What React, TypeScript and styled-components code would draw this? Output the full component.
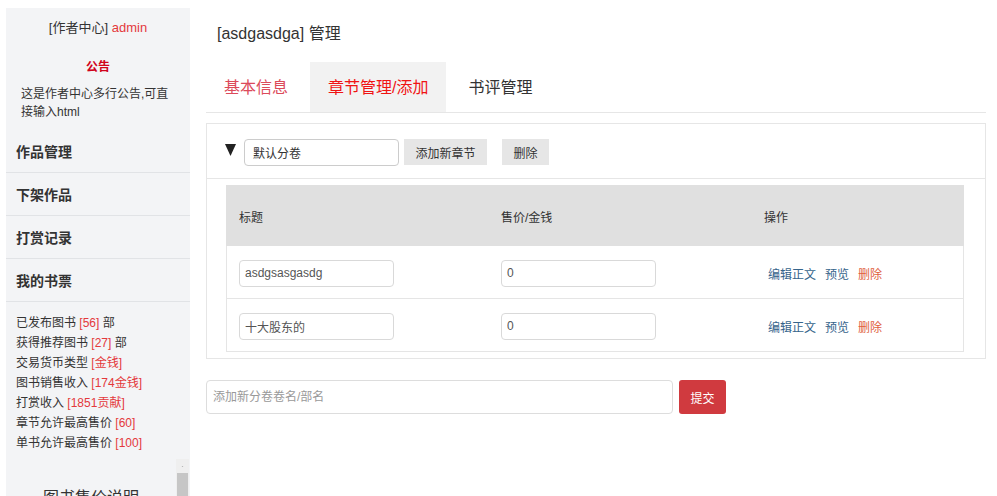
import React from "react";
import styled, { createGlobalStyle } from "styled-components";

const Global = createGlobalStyle`
  html, body { margin: 0; padding: 0; height: 100%; overflow: hidden; background: #fff; }
  body {
    font-family: "Liberation Sans", "Noto Sans CJK SC", sans-serif;
    color: #333;
    font-size: 12px;
  }
  * { box-sizing: border-box; }
`;

const Page = styled.div`
  display: flex;
  align-items: flex-start;
  padding: 8px 0 0 6px;
  height: 496px;
  overflow: hidden;
`;

const Sidebar = styled.aside`
  width: 184px;
  flex-shrink: 0;
  height: 520px;
  background: #f3f4f6;
  display: flex;
  flex-direction: column;
`;

const SideHeader = styled.div`
  padding-top: 11px;
  line-height: 18px;
  font-size: 13px;
  text-align: center;
  color: #333;
`;

const Red = styled.span<{ $dark?: boolean }>`
  color: ${(p) => (p.$dark ? "#e00" : "#e4393c")};
`;

const NoticeTitle = styled.div`
  margin-top: 21px;
  line-height: 18px;
  font-size: 12px;
  font-weight: bold;
  text-align: center;
  color: #d0021b;
`;

const NoticeText = styled.p`
  margin: 9px 0 0;
  padding: 0 15px;
  line-height: 18px;
  font-size: 12px;
  color: #333;
`;

const Menu = styled.nav`
  margin-top: 9px;
  display: flex;
  flex-direction: column;
`;

const MenuItem = styled.a`
  height: 43px;
  line-height: 44px;
  padding-left: 10px;
  border-bottom: 1px solid #e1e3e6;
  font-size: 14px;
  font-weight: bold;
  color: #333;
  text-decoration: none;
`;

const Stats = styled.ul`
  list-style: none;
  margin: 0;
  padding: 11px 0 0 10px;
`;

const StatLine = styled.li`
  line-height: 20px;
  font-size: 12px;
  color: #333;
`;

const ScrollBox = styled.div`
  margin-top: 6px;
  height: 200px;
  display: flex;
  overflow: hidden;
`;

const ScrollContent = styled.div`
  flex: 1;
  min-width: 0;
  overflow: hidden;
`;

const FakeScrollbar = styled.div`
  width: 13px;
  flex-shrink: 0;
  margin-right: 1px;
  background: #efefef;
  display: flex;
  flex-direction: column;
  align-items: center;
  padding-top: 7px;
`;

const BarArrow = styled.svg`
  width: 7px;
  height: 4px;
  display: block;
`;

const BarThumb = styled.div`
  margin-top: 6px;
  width: 11px;
  height: 150px;
  background: #c6c6c6;
`;

const ScrollTitle = styled.h3`
  margin: 0;
  padding-top: 29px;
  line-height: 20px;
  font-size: 16px;
  font-weight: normal;
  text-align: center;
  color: #333;
`;

const ScrollText = styled.p`
  margin: 10px 0 0;
  padding: 0 10px;
  line-height: 20px;
  font-size: 12px;
`;

const Main = styled.main`
  margin-left: 16px;
  width: 780px;
  flex-shrink: 0;
`;

const Title = styled.h2`
  margin: 14px 0 0 11px;
  line-height: 24px;
  font-size: 16px;
  font-weight: normal;
  color: #333;
`;

const Tabs = styled.div`
  margin-top: 16px;
  display: flex;
  gap: 4px;
  border-bottom: 1px solid #e6e6e6;
`;

const Tab = styled.a<{ $active?: boolean; $color: string }>`
  height: 50px;
  line-height: 52px;
  padding: 0 18px;
  font-size: 16px;
  color: ${(p) => p.$color};
  background: ${(p) => (p.$active ? "#f2f2f2" : "transparent")};
  text-decoration: none;
`;

const Panel = styled.section`
  margin-top: 10px;
  border: 1px solid #e6e6e6;
`;

const PanelHead = styled.div`
  height: 55px;
  display: flex;
  align-items: center;
  padding: 2px 0 0 18px;
  border-bottom: 1px solid #e6e6e6;
`;

const Arrow = styled.svg`
  width: 11px;
  height: 12px;
  margin-top: -4px;
  flex-shrink: 0;
`;

const VolumeInput = styled.input`
  width: 155px;
  height: 27px;
  margin-left: 8px;
  padding: 0 8px;
  border: 1px solid #ccc;
  border-radius: 4px;
  font: inherit;
  font-size: 12px;
  color: #333;
  outline: none;
`;

const GrayButton = styled.button<{ $gap: number }>`
  height: 26px;
  margin-left: ${(p) => p.$gap}px;
  padding: 0 11.5px;
  border: none;
  background: #e6e6e6;
  font: inherit;
  font-size: 12px;
  color: #333;
`;

const TableWrap = styled.div`
  padding: 6px 21px 6px 19px;
`;

const Grid = styled.div<{ $head?: boolean }>`
  display: grid;
  grid-template-columns: 262px 263px 1fr;
  align-items: center;
  height: ${(p) => (p.$head ? "61px" : "53px")};
  padding-top: ${(p) => (p.$head ? "1px" : "2px")};
  background: ${(p) => (p.$head ? "#e0e0e0" : "#fff")};
  border-left: 1px solid ${(p) => (p.$head ? "#e0e0e0" : "#e5e5e5")};
  border-right: 1px solid ${(p) => (p.$head ? "#e0e0e0" : "#e5e5e5")};
  border-bottom: ${(p) => (p.$head ? "none" : "1px solid #e5e5e5")};
`;

const Cell = styled.div<{ $pad?: number }>`
  padding-left: ${(p) => p.$pad ?? 12}px;
  font-size: 12px;
  color: #333;
  display: flex;
  align-items: center;
`;

const CellInput = styled.input`
  width: 155px;
  height: 27px;
  padding: 0 5px;
  border: 1px solid #d9d9d9;
  border-radius: 4px;
  font: inherit;
  font-size: 12px;
  color: #555;
  outline: none;
`;

const ActionLink = styled.a<{ $danger?: boolean }>`
  margin-right: 9px;
  font-size: 12px;
  color: ${(p) => (p.$danger ? "#e0603c" : "#36648b")};
  text-decoration: none;
`;

const AddForm = styled.form`
  margin-top: 21px;
  display: flex;
  gap: 6px;
`;

const AddInput = styled.input`
  width: 467px;
  height: 34px;
  padding: 0 6px;
  border: 1px solid #ddd;
  border-radius: 4px;
  font: inherit;
  font-size: 12px;
  outline: none;
  &::placeholder { color: #999; }
`;

const SubmitButton = styled.button`
  width: 47px;
  height: 34px;
  border: none;
  border-radius: 3px;
  background: #d03a3f;
  color: #fff;
  font: inherit;
  font-size: 12px;
`;

const stats: [string, string, string?][] = [
  ["已发布图书", "[56]", "部"],
  ["获得推荐图书", "[27]", "部"],
  ["交易货币类型", "[金钱]"],
  ["图书销售收入", "[174金钱]"],
  ["打赏收入", "[1851贡献]"],
  ["章节允许最高售价", "[60]"],
  ["单书允许最高售价", "[100]"],
];

const chapters = [
  { title: "asdgsasgasdg", price: "0" },
  { title: "十大股东的", price: "0" },
];

export default function App() {
  return (
    <>
      <Global />
      <Page>
        <Sidebar>
          <SideHeader>
            [作者中心] <Red>admin</Red>
          </SideHeader>
          <NoticeTitle>公告</NoticeTitle>
          <NoticeText>这是作者中心多行公告,可直接输入html</NoticeText>
          <Menu>
            <MenuItem>作品管理</MenuItem>
            <MenuItem>下架作品</MenuItem>
            <MenuItem>打赏记录</MenuItem>
            <MenuItem>我的书票</MenuItem>
          </Menu>
          <Stats>
            {stats.map(([label, value, unit]) => (
              <StatLine key={label}>
                {label} <Red>{value}</Red>
                {unit ? ` ${unit}` : ""}
              </StatLine>
            ))}
          </Stats>
          <ScrollBox>
            <ScrollContent>
              <ScrollTitle>图书售价说明</ScrollTitle>
              <ScrollText>
                章节售价以金钱计算，单章售价不得超过章节允许最高售价，整本图书售价不得超过单书允许最高售价。
              </ScrollText>
              <ScrollText>售价为0的章节为免费章节，读者可直接阅读。</ScrollText>
            </ScrollContent>
            <FakeScrollbar>
              <BarArrow viewBox="0 0 7 4">
                <polygon points="3.5,0 7,4 0,4" fill="#a3a3a3" />
              </BarArrow>
              <BarThumb />
            </FakeScrollbar>
          </ScrollBox>
        </Sidebar>
        <Main>
          <Title>[asdgasdga] 管理</Title>
          <Tabs>
            <Tab $color="#dc4a5a">基本信息</Tab>
            <Tab $active $color="#f01414">
              章节管理/添加
            </Tab>
            <Tab $color="#333">书评管理</Tab>
          </Tabs>
          <Panel>
            <PanelHead>
              <Arrow viewBox="0 0 11 12">
                <polygon points="0,0 11,0 5.5,12" fill="#222" />
              </Arrow>
              <VolumeInput defaultValue="默认分卷" />
              <GrayButton $gap={5}>添加新章节</GrayButton>
              <GrayButton $gap={15}>删除</GrayButton>
            </PanelHead>
            <TableWrap>
              <Grid $head>
                <Cell>标题</Cell>
                <Cell>售价/金钱</Cell>
                <Cell>操作</Cell>
              </Grid>
              {chapters.map((c) => (
                <Grid key={c.title}>
                  <Cell>
                    <CellInput defaultValue={c.title} />
                  </Cell>
                  <Cell>
                    <CellInput defaultValue={c.price} />
                  </Cell>
                  <Cell $pad={16}>
                    <ActionLink>编辑正文</ActionLink>
                    <ActionLink>预览</ActionLink>
                    <ActionLink $danger>删除</ActionLink>
                  </Cell>
                </Grid>
              ))}
            </TableWrap>
          </Panel>
          <AddForm onSubmit={(e) => e.preventDefault()}>
            <AddInput placeholder="添加新分卷卷名/部名" />
            <SubmitButton type="submit">提交</SubmitButton>
          </AddForm>
        </Main>
      </Page>
    </>
  );
}
